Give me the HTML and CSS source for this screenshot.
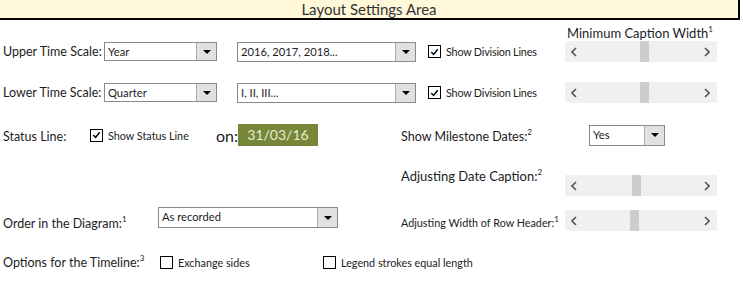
FILE: index.html
```html
<!DOCTYPE html>
<html>
<head>
<meta charset="utf-8">
<link rel="stylesheet" href="styles.css">
</head>
<body>
<div class="header">Layout Settings Area</div>

<div class="caption-row"><span class="caption">Minimum Caption Width<sup>1</sup></span></div>

<div class="row row1">
  <span class="label w-scale">Upper Time Scale:</span>
  <div class="combo combo-scale"><span class="combo-text">Year</span><span class="combo-btn"><span class="arrow"></span></span></div>
  <div class="combo combo-fmt"><span class="combo-text">2016, 2017, 2018...</span><span class="combo-btn"><span class="arrow"></span></span></div>
  <label class="check check-div"><span class="box"><svg viewBox="0 0 12 12" width="12" height="12"><polyline points="2.5,6 5,8.7 9.5,3" fill="none" stroke="#000" stroke-width="1.6"/></svg></span><span class="small">Show Division Lines</span></label>
  <div class="scroll"><span class="sb-arrow"><svg viewBox="0 0 6 10" width="6" height="10"><polyline points="5,1 1,5 5,9" fill="none" stroke="#555" stroke-width="1.6"/></svg></span><span class="track"><span class="thumb" style="margin-left:58px"></span></span><span class="sb-arrow right"><svg viewBox="0 0 6 10" width="6" height="10"><polyline points="1,1 5,5 1,9" fill="none" stroke="#555" stroke-width="1.6"/></svg></span></div>
</div>

<div class="row row2">
  <span class="label w-scale">Lower Time Scale:</span>
  <div class="combo combo-scale"><span class="combo-text">Quarter</span><span class="combo-btn"><span class="arrow"></span></span></div>
  <div class="combo combo-fmt"><span class="combo-text">I, II, III...</span><span class="combo-btn"><span class="arrow"></span></span></div>
  <label class="check check-div"><span class="box"><svg viewBox="0 0 12 12" width="12" height="12"><polyline points="2.5,6 5,8.7 9.5,3" fill="none" stroke="#000" stroke-width="1.6"/></svg></span><span class="small">Show Division Lines</span></label>
  <div class="scroll"><span class="sb-arrow"><svg viewBox="0 0 6 10" width="6" height="10"><polyline points="5,1 1,5 5,9" fill="none" stroke="#555" stroke-width="1.6"/></svg></span><span class="track"><span class="thumb" style="margin-left:58px"></span></span><span class="sb-arrow right"><svg viewBox="0 0 6 10" width="6" height="10"><polyline points="1,1 5,5 1,9" fill="none" stroke="#555" stroke-width="1.6"/></svg></span></div>
</div>

<div class="row row3">
  <span class="label w-status">Status Line:</span>
  <label class="check check-status"><span class="box"><svg viewBox="0 0 12 12" width="12" height="12"><polyline points="2.5,6 5,8.7 9.5,3" fill="none" stroke="#000" stroke-width="1.6"/></svg></span><span class="small">Show Status Line</span></label>
  <span class="on">on:</span>
  <span class="date">31/03/16</span>
  <span class="label w-right">Show Milestone Dates:<sup>2</sup></span>
  <div class="combo combo-yes"><span class="combo-text">Yes</span><span class="combo-btn"><span class="arrow"></span></span></div>
</div>

<div class="row row4">
  <span class="label w-right2 lift">Adjusting Date Caption:<sup>2</sup></span>
  <div class="scroll"><span class="sb-arrow"><svg viewBox="0 0 6 10" width="6" height="10"><polyline points="5,1 1,5 5,9" fill="none" stroke="#555" stroke-width="1.6"/></svg></span><span class="track"><span class="thumb" style="margin-left:50px"></span></span><span class="sb-arrow right"><svg viewBox="0 0 6 10" width="6" height="10"><polyline points="1,1 5,5 1,9" fill="none" stroke="#555" stroke-width="1.6"/></svg></span></div>
</div>

<div class="row row5">
  <span class="label w-order">Order in the Diagram:<sup>1</sup></span>
  <div class="combo combo-order"><span class="combo-text">As recorded</span><span class="combo-btn"><span class="arrow"></span></span></div>
  <span class="label w-right2 tiny">Adjusting Width of Row Header:<sup>1</sup></span>
  <div class="scroll scroll-low"><span class="sb-arrow"><svg viewBox="0 0 6 10" width="6" height="10"><polyline points="5,1 1,5 5,9" fill="none" stroke="#555" stroke-width="1.6"/></svg></span><span class="track"><span class="thumb" style="margin-left:48px"></span></span><span class="sb-arrow right"><svg viewBox="0 0 6 10" width="6" height="10"><polyline points="1,1 5,5 1,9" fill="none" stroke="#555" stroke-width="1.6"/></svg></span></div>
</div>

<div class="row row6">
  <span class="label w-opt">Options for the Timeline:<sup>3</sup></span>
  <label class="check check-ex"><span class="box"></span><span class="small">Exchange sides</span></label>
  <label class="check"><span class="box"></span><span class="small">Legend strokes equal length</span></label>
</div>
</body>
</html>
```

FILE: styles.css
```css
* { box-sizing: border-box; }
body {
  margin: 0;
  font-family: Lato, "Open Sans", sans-serif;
  font-size: 12.5px;
  color: #1c1c24;
  background: #fff;
  width: 743px;
  height: 281px;
  overflow: hidden;
}
.header {
  width: 740px;
  height: 20px;
  background: #fff8d9;
  border-bottom: 2px solid #000;
  border-right: 2px solid #000;
  text-align: center;
  font-size: 15px;
  line-height: 18px;
  color: #333;
}
sup {
  font-size: 8px;
  vertical-align: top;
  line-height: 8px;
  position: relative;
  top: -1px;
}
.caption-row {
  height: 21px;
  padding-left: 567px;
  padding-top: 6px;
  line-height: 14px;
}
.caption { font-size: 13px; }
.row {
  display: flex;
  align-items: center;
  padding-left: 3px;
}
.row1 { height: 21px; }
.row2 { height: 21px; margin-top: 20px; }
.row3 { height: 22px; margin-top: 21px; }
.row4 { height: 22px; margin-top: 29px; padding-left: 401px; align-items: flex-start; }
.row5 { height: 24px; margin-top: 10px; }
.row6 { height: 12px; margin-top: 25px; }

.label { flex: none; white-space: nowrap; }
.w-scale { width: 101px; }
.w-status { width: 87px; }
.w-right { width: 188px; margin-left: 83px; margin-top: 2px; }
.w-right2 { width: 164px; }
.lift { font-size: 13px; line-height: 14px; margin-top: -6px; }
.w-order { width: 155px; }
.w-opt { width: 157px; }
.tiny { font-size: 10.8px; margin-left: 63px; }
.row5 .w-order { margin-top: 8px; }
.row5 .tiny { margin-top: 6px; }
.row3 .w-status { margin-top: 2px; }

.combo {
  flex: none;
  display: flex;
  align-items: stretch;
  height: 20px;
  border: 1px solid #8a8a8a;
  background: #fff;
}
.combo-text {
  flex: 1;
  padding-left: 3px;
  font-size: 11.2px;
  line-height: 18px;
  white-space: nowrap;
  overflow: hidden;
}
.combo-btn {
  flex: none;
  width: 20px;
  background: #e1e1e1;
  border-left: 1px solid #adadad;
  display: flex;
  align-items: center;
  justify-content: center;
}
.arrow {
  width: 0;
  height: 0;
  border-left: 4px solid transparent;
  border-right: 4px solid transparent;
  border-top: 4px solid #000;
}
.combo-scale { width: 113px; height: 19px; }
.combo-fmt { width: 179px; margin-left: 20px; }
.combo-yes { width: 76px; height: 21px; }
.combo-order { width: 180px; height: 21px; align-self: flex-start; }

.check {
  flex: none;
  display: flex;
  align-items: center;
  gap: 5px;
}
.box {
  width: 13px;
  height: 13px;
  border: 1px solid #000;
  background: #fff;
  display: flex;
  align-items: center;
  justify-content: center;
}
.box svg { display: block; }
.small { font-size: 10.8px; white-space: nowrap; }
.check-div { width: 137px; margin-left: 12px; }
.check-div .small { letter-spacing: -0.2px; }
.check-status { width: 126px; }
.check-ex { width: 163px; }

.on { flex: none; width: 22px; font-size: 16px; }
.date {
  flex: none;
  width: 80px;
  height: 22px;
  background: #76873a;
  color: #ece9d8;
  font-size: 14px;
  line-height: 22px;
  text-align: center;
}

.scroll {
  flex: none;
  width: 152px;
  height: 21px;
  background: #f0f0f0;
  display: flex;
  align-items: stretch;
}
.sb-arrow {
  flex: none;
  width: 17px;
  display: flex;
  align-items: center;
  justify-content: center;
}
.sb-arrow.right { width: 20px; }
.track { flex: 1; display: flex; }
.thumb { width: 9px; background: #cdcdcd; }
.scroll-low { align-self: flex-end; }
```
